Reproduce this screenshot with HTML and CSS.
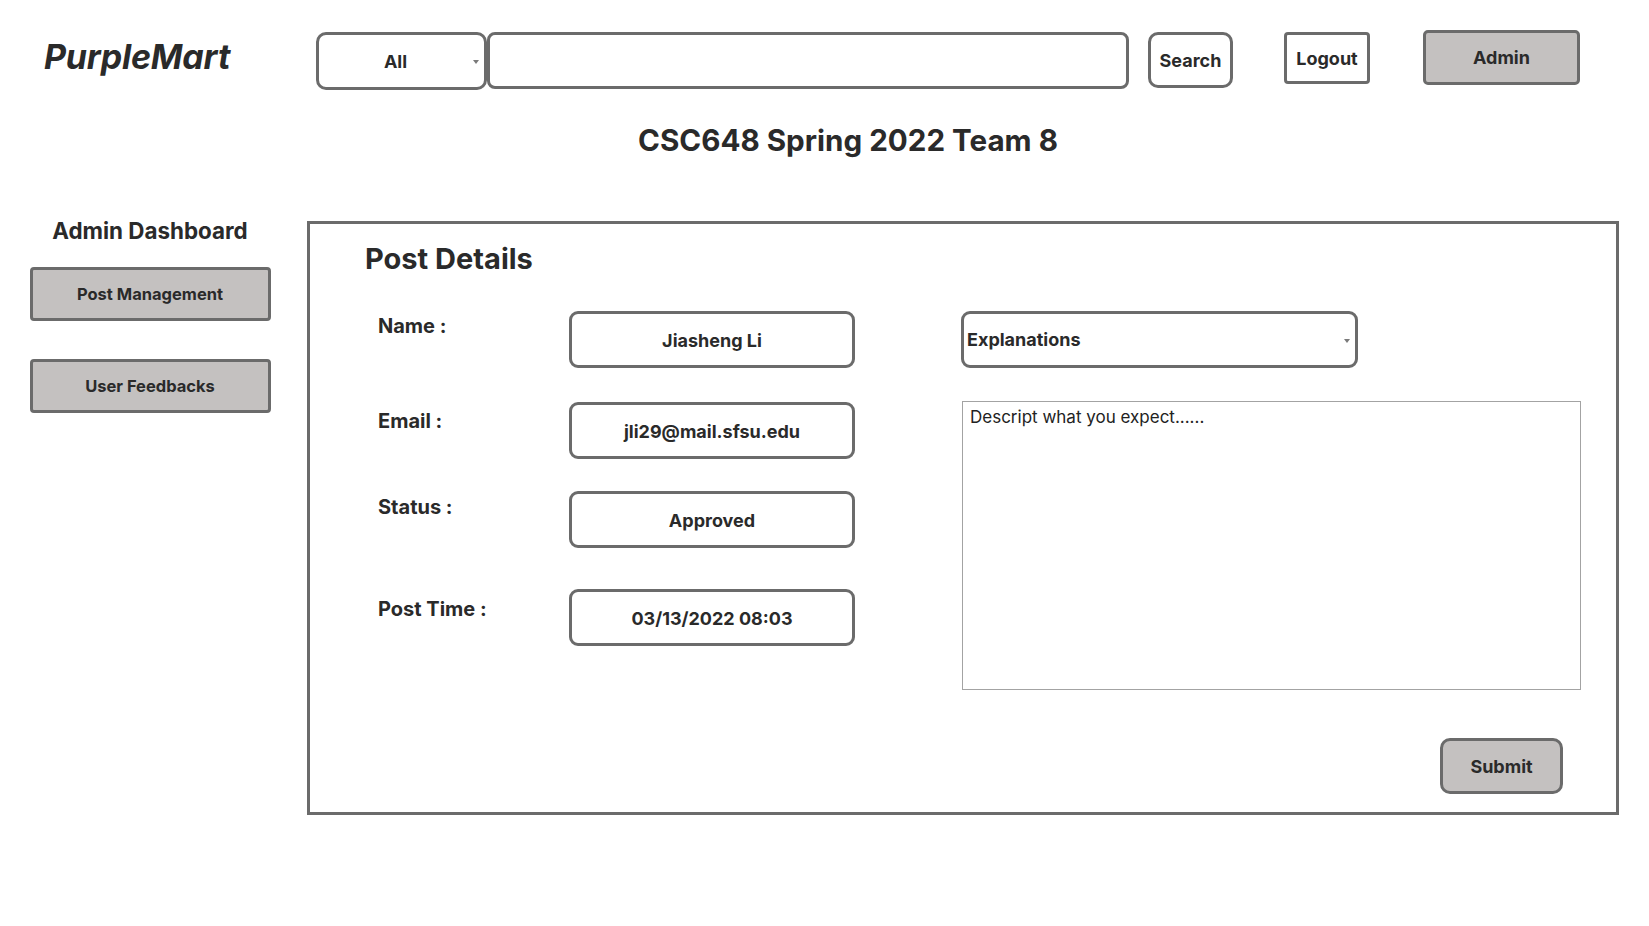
FILE: index.html
```html
<!DOCTYPE html>
<html lang="en">
<head>
<meta charset="utf-8">
<title>PurpleMart - Post Details</title>
<link rel="stylesheet" href="styles.css">
</head>
<body>
<header class="topbar">
  <div class="logo">PurpleMart</div>
  <div class="cat-select"><span>All</span><span class="caret"></span></div>
  <div class="search-input"></div>
  <button class="btn btn-search">Search</button>
  <button class="btn btn-logout">Logout</button>
  <button class="btn btn-admin">Admin</button>
</header>
<h1 class="team">CSC648 Spring 2022 Team 8</h1>
<div class="layout">
  <aside class="sidebar">
    <h2 class="side-title">Admin Dashboard</h2>
    <button class="side-btn">Post Management</button>
    <button class="side-btn side-btn-2">User Feedbacks</button>
  </aside>
  <main class="panel">
    <h2 class="panel-title">Post Details</h2>
    <div class="panel-body">
      <div class="fields">
        <div class="row row-1"><div class="label">Name :</div><div class="value">Jiasheng Li</div></div>
        <div class="row row-2"><div class="label">Email :</div><div class="value">jli29@mail.sfsu.edu</div></div>
        <div class="row row-3"><div class="label">Status :</div><div class="value">Approved</div></div>
        <div class="row row-4"><div class="label">Post Time :</div><div class="value">03/13/2022 08:03</div></div>
      </div>
      <div class="explain">
        <div class="exp-select"><span>Explanations</span><span class="caret"></span></div>
        <div class="exp-text">Descript what you expect......</div>
      </div>
    </div>
    <div class="actions"><button class="btn btn-submit">Submit</button></div>
  </main>
</div>
</body>
</html>
```
FILE: styles.css
```css
* { box-sizing: border-box; }
body {
  margin: 0;
  background: #ffffff;
  color: #2a2a2a;
  font-family: Inter, "Noto Sans", "Liberation Sans", sans-serif;
}
button { font-family: inherit; color: inherit; cursor: pointer; }

.topbar {
  display: flex;
  align-items: flex-start;
  padding: 32px 0 0 44px;
  height: 90px;
}
.logo {
  width: 272px;
  margin-top: 5px;
  font-size: 34px;
  line-height: 40px;
  font-weight: 700;
  font-style: italic;
  letter-spacing: -0.2px;
}
.cat-select {
  position: relative;
  width: 171px;
  height: 58px;
  border: 3px solid #6b6b6b;
  border-radius: 10px;
  display: flex;
  align-items: center;
  justify-content: center;
  padding-right: 12px;
  font-size: 18px;
  font-weight: 700;
}
.caret {
  position: absolute;
  width: 0;
  height: 0;
  border-left: 3px solid transparent;
  border-right: 3px solid transparent;
  border-top: 4px solid #7a7a7a;
}
.cat-select .caret { right: 5px; top: 25px; }
.search-input {
  width: 642px;
  height: 57px;
  border: 3px solid #6b6b6b;
  border-radius: 8px;
}
.btn {
  border: 3px solid #6b6b6b;
  background: #ffffff;
  font-size: 18px;
  font-weight: 700;
  padding: 0;
}
.btn-search {
  margin-left: 19px;
  width: 85px;
  height: 56px;
  border-radius: 10px;
}
.btn-logout {
  margin-left: 51px;
  width: 86px;
  height: 52px;
  border-radius: 4px;
}
.btn-admin {
  margin-left: 53px;
  margin-top: -2px;
  width: 157px;
  height: 55px;
  border-radius: 5px;
  background: #c4c1c0;
}

.team {
  margin: 32px 0 0;
  padding-left: 47px;
  text-align: center;
  font-size: 29.6px;
  line-height: 36px;
  font-weight: 700;
}

.layout {
  display: flex;
  align-items: flex-start;
  margin-top: 60px;
  padding-left: 30px;
}
.sidebar {
  width: 240px;
  flex-shrink: 0;
  display: flex;
  flex-direction: column;
  align-items: center;
}
.side-title {
  margin: 0;
  font-size: 22.4px;
  line-height: 26px;
  font-weight: 700;
}
.side-btn {
  width: 241px;
  height: 54px;
  margin-top: 23px;
  border: 3px solid #6b6b6b;
  border-radius: 4px;
  background: #c4c1c0;
  font-size: 16.5px;
  font-weight: 700;
  padding: 0;
}
.side-btn-2 { margin-top: 38px; }

.panel {
  margin-left: 37px;
  margin-top: 3px;
  width: 1312px;
  flex-shrink: 0;
  border: 3px solid #6b6b6b;
  padding: 17px 36px 18px 55px;
}
.panel-title {
  margin: 0;
  font-size: 29px;
  line-height: 36px;
  font-weight: 700;
}
.panel-body {
  display: flex;
  align-items: flex-start;
  margin-top: 34px;
}
.fields {
  width: 596px;
  flex-shrink: 0;
  padding-left: 13px;
  display: flex;
  flex-direction: column;
}
.row {
  display: flex;
  align-items: flex-start;
}
.row-2 { margin-top: 34px; }
.row-3 { margin-top: 32px; }
.row-4 { margin-top: 41px; }
.label {
  width: 191px;
  padding-top: 3px;
  font-size: 20px;
  line-height: 24px;
  font-weight: 700;
}
.row-2 .label { padding-top: 7px; }
.row-3 .label { padding-top: 4px; }
.row-4 .label { padding-top: 8px; }
.value {
  width: 286px;
  height: 57px;
  border: 3px solid #6b6b6b;
  border-radius: 9px;
  display: flex;
  align-items: center;
  justify-content: center;
  font-size: 18px;
  font-weight: 700;
  padding-top: 1px;
}
.explain {
  flex-shrink: 0;
  display: flex;
  flex-direction: column;
}
.exp-select {
  position: relative;
  width: 397px;
  height: 57px;
  border: 3px solid #6b6b6b;
  border-radius: 9px;
  display: flex;
  align-items: center;
  padding-left: 3px;
  font-size: 18px;
  font-weight: 700;
}
.exp-select .caret { right: 5px; top: 25px; }
.exp-text {
  margin-top: 33px;
  margin-left: 1px;
  width: 619px;
  height: 289px;
  border: 1px solid #a3a3a3;
  padding: 4px 7px;
  font-size: 17px;
  line-height: 22px;
  color: #222222;
}
.actions {
  display: flex;
  justify-content: flex-end;
  margin-top: 48px;
  padding-right: 17px;
}
.btn-submit {
  width: 123px;
  height: 56px;
  border-radius: 10px;
  background: #c4c1c0;
}
```
